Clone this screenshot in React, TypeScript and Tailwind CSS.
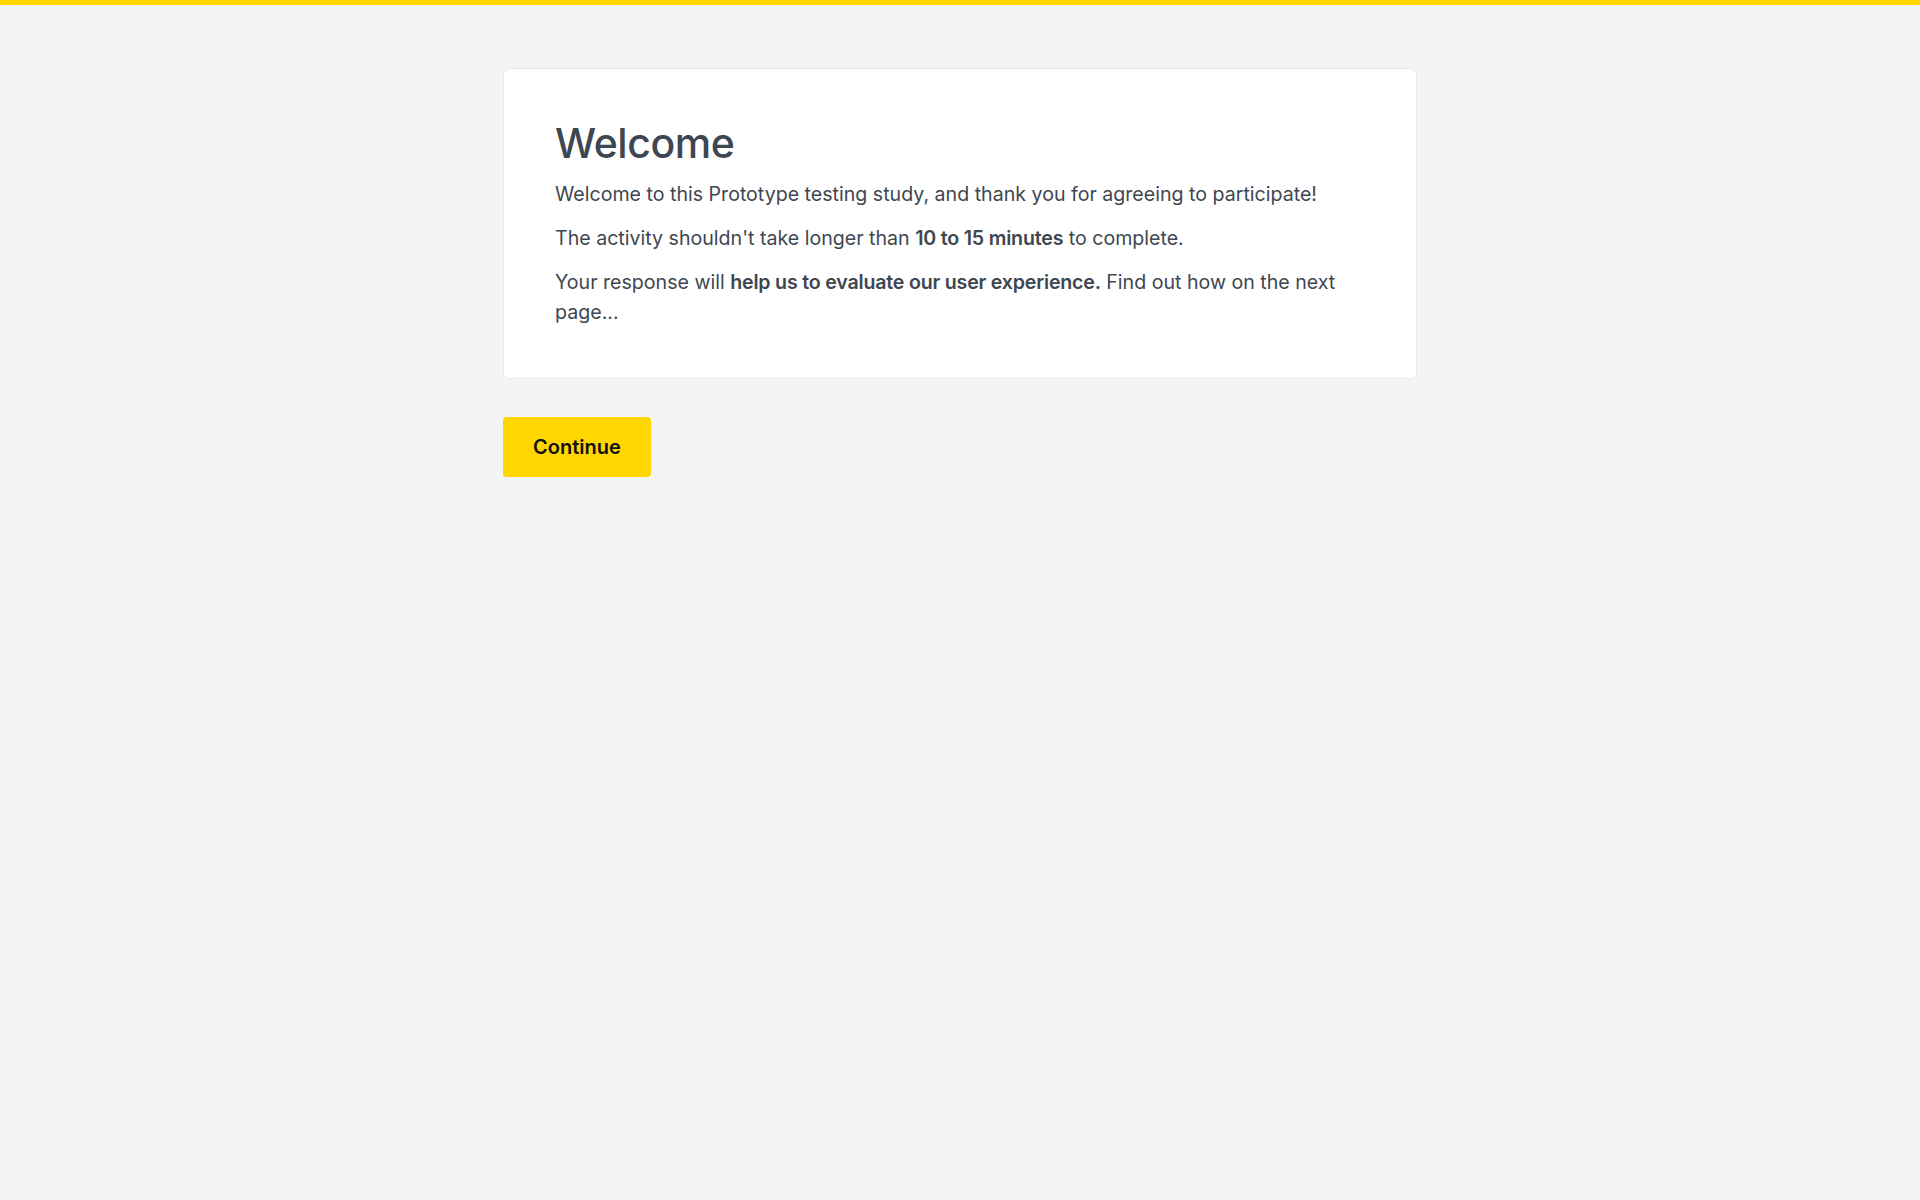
import React from 'react';

const App: React.FC = () => {
    return (
        <div className="min-h-screen bg-[#f3f4f6] font-['Inter',sans-serif] text-[#3e4751]">
            {/* Top accent bar */}
            <div className="h-[5px] bg-[#ffd600]" />

            <main className="w-[914px] ml-[503px] pt-[63px]">
                {/* Welcome card */}
                <section className="bg-white border border-[#e6e8eb] rounded-[6px] pt-[49px] pb-[51px] pl-[51px] pr-[52px]">
                    <h1 className="text-[41px] leading-[50px] font-medium tracking-[-0.01em] mb-[11px]">Welcome</h1>
                    <div className="text-[19.6px] leading-[30px] space-y-[14px]">
                        <p>Welcome to this Prototype testing study, and thank you for agreeing to participate!</p>
                        <p>
                            The activity shouldn't take longer than <strong className="font-semibold tracking-[-0.01em]">10 to 15 minutes</strong> to complete.
                        </p>
                        <p>
                            Your response will <strong className="font-semibold tracking-[-0.01em]">help us to evaluate our user experience.</strong> Find out how on the next page...
                        </p>
                    </div>
                </section>

                <button className="mt-[38px] h-[60px] w-[148px] rounded-[4px] bg-[#ffd600] text-[20px] font-semibold text-[#111111] flex items-center justify-center pb-[1px]">
                    Continue
                </button>
            </main>
        </div>
    );
};

export default App;
